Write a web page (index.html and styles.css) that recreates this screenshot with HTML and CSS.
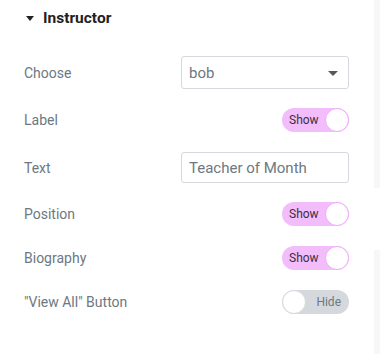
FILE: index.html
```html
<!DOCTYPE html>
<html lang="en">
<head>
    <meta charset="UTF-8">
    <meta name="viewport" content="width=device-width, initial-scale=1.0">
    <title>Instructor</title>
    <link rel="stylesheet" href="styles.css">
</head>
<body>
    <div class="panel">
        <div class="section">
            <div class="section-title">
                <span class="caret"></span>
                <span>Instructor</span>
            </div>
            <div class="controls">
                <div class="row row-select">
                    <label>Choose</label>
                    <div class="select">
                        <span>bob</span>
                        <span class="select-arrow"></span>
                    </div>
                </div>
                <div class="row">
                    <label>Label</label>
                    <div class="switch on"><span class="switch-text">Show</span><span class="knob"></span></div>
                </div>
                <div class="row row-text">
                    <label>Text</label>
                    <input class="text-input" type="text" value="Teacher of Month">
                </div>
                <div class="row">
                    <label>Position</label>
                    <div class="switch on"><span class="switch-text">Show</span><span class="knob"></span></div>
                </div>
                <div class="row">
                    <label>Biography</label>
                    <div class="switch on"><span class="switch-text">Show</span><span class="knob"></span></div>
                </div>
                <div class="row">
                    <label>"View All" Button</label>
                    <div class="switch off"><span class="knob"></span><span class="switch-text">Hide</span></div>
                </div>
            </div>
        </div>
        <div class="side">
            <div class="side-top"></div>
            <div class="side-gap"></div>
            <div class="side-bottom"></div>
        </div>
    </div>
</body>
</html>
```

FILE: styles.css
```css
body {
    margin: 0;
    padding: 0;
    font-family: Roboto, Arial, sans-serif;
    background-color: #fff;
}
.panel {
    display: flex;
    width: 380px;
    height: 354px;
    overflow: hidden;
}
.section {
    flex: 1;
    padding: 0 25px 0 24px;
}
.section-title {
    display: flex;
    align-items: center;
    height: 36px;
    font-size: 15.5px;
    font-weight: 700;
    color: #1f2124;
}
.caret {
    width: 0;
    height: 0;
    border-left: 4px solid transparent;
    border-right: 4px solid transparent;
    border-top: 5px solid #1f2124;
    margin: 1px 9px 0 2px;
}
.controls {
    display: flex;
    flex-direction: column;
    margin-top: 20px;
}
.row {
    display: flex;
    align-items: center;
    justify-content: space-between;
    height: 24px;
    margin-bottom: 20px;
}
.row-select {
    height: 33px;
    margin-bottom: 19px;
}
.row-text {
    height: 31px;
    margin-bottom: 19px;
}
.row label {
    font-size: 14px;
    color: #6d7882;
}
.select {
    box-sizing: border-box;
    width: 168px;
    height: 33px;
    border: 1px solid #d5d8dc;
    border-radius: 3px;
    display: flex;
    align-items: center;
    justify-content: space-between;
    padding: 0 10px 0 7px;
    font-size: 15px;
    color: #6d7882;
}
.select-arrow {
    width: 0;
    height: 0;
    border-left: 5px solid transparent;
    border-right: 5px solid transparent;
    border-top: 5px solid #55595c;
    margin-top: 1px;
}
.text-input {
    box-sizing: border-box;
    width: 168px;
    height: 31px;
    border: 1px solid #d5d8dc;
    border-radius: 3px;
    padding: 0 7px;
    font-family: Roboto, Arial, sans-serif;
    font-size: 15px;
    color: #6d7882;
    outline: none;
}
.switch {
    box-sizing: border-box;
    width: 67px;
    height: 24px;
    border-radius: 12px;
    display: flex;
    align-items: center;
    font-size: 12px;
}
.switch.on {
    background-color: #f3bdfc;
    color: #3a2f3d;
    justify-content: space-between;
    padding-left: 7px;
}
.switch.off {
    background-color: #d5d8dc;
    color: #6d7882;
    justify-content: space-between;
    padding-right: 8px;
}
.knob {
    box-sizing: border-box;
    width: 24px;
    height: 24px;
    border-radius: 50%;
    background-color: #fff;
}
.switch.on .knob {
    border: 1px solid #f0a9fb;
}
.switch.off .knob {
    border: 1px solid #d5d8dc;
}
.side {
    width: 6px;
    display: flex;
    flex-direction: column;
}
.side-top {
    height: 188px;
    background-color: #f7f7f7;
}
.side-gap {
    height: 62px;
}
.side-bottom {
    flex: 1;
    background-color: #f7f7f7;
}
```
